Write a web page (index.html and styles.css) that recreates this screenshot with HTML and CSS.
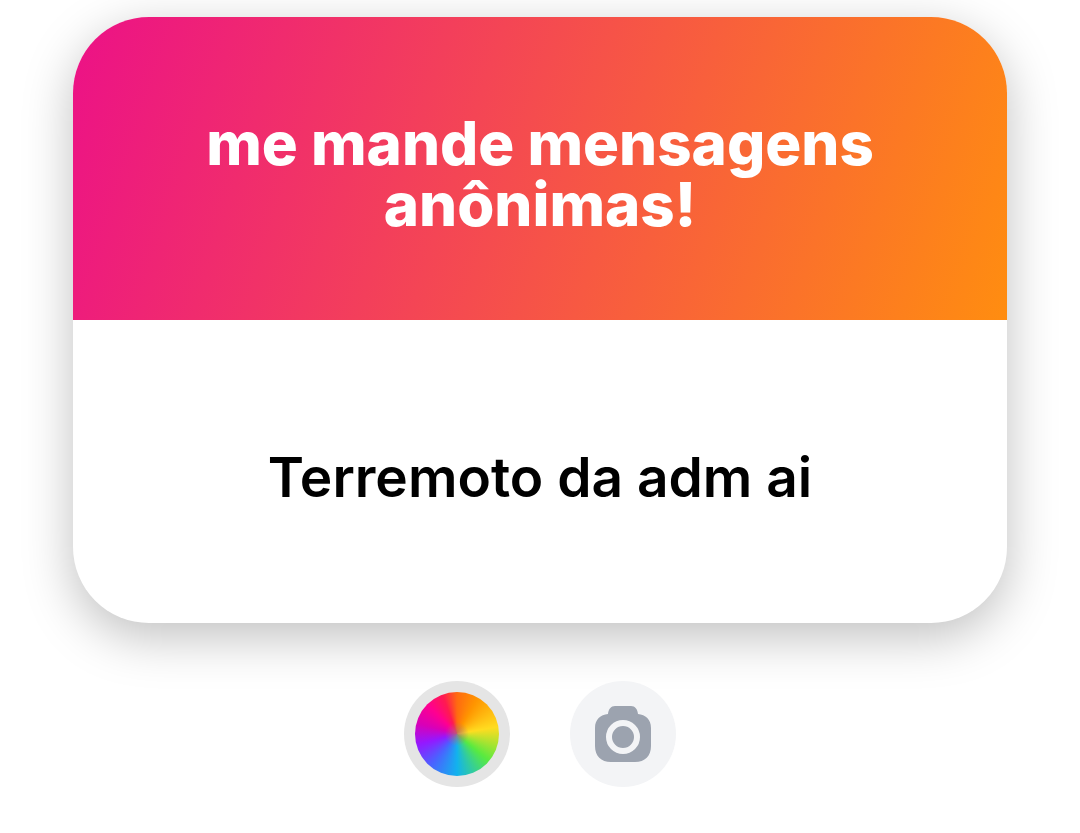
FILE: index.html
```html
<!DOCTYPE html>
<html lang="pt-BR">
<head>
<meta charset="utf-8">
<meta name="viewport" content="width=device-width, initial-scale=1">
<title>me mande mensagens anônimas!</title>
<link rel="stylesheet" href="styles.css">
</head>
<body>
<main class="page">
  <article class="card">
    <header class="card-header">
      <h1 class="card-title">me mande mensagens anônimas!</h1>
    </header>
    <div class="card-body">
      <p class="message">Terremoto da adm ai</p>
    </div>
  </article>
  <div class="tools">
    <button class="tool tool-color" type="button" aria-label="Cor"><span class="wheel"></span></button>
    <button class="tool tool-camera" type="button" aria-label="Câmera">
      <svg class="camera" viewBox="0 0 56 56" aria-hidden="true">
        <path fill="#9ca3af" d="M20 0H36C40 0 42.500 3 43 8C50.500 9 56 13 56 22V40C56 50 50 56 40 56H16C6 56 0 50 0 40V22C0 13 5.500 9 13 8C13.500 3 16 0 20 0Z"/>
        <circle cx="28" cy="31" r="14" fill="none" stroke="#f3f4f6" stroke-width="6"/>
      </svg>
    </button>
  </div>
</main>
</body>
</html>
```
FILE: styles.css
```css
* {
  box-sizing: border-box;
}

body {
  margin: 0;
  background: #fff;
  font-family: Inter, "Liberation Sans", sans-serif;
}

.page {
  display: flex;
  flex-direction: column;
  gap: 58px;
  padding: 17px 73px 46px;
}

.card {
  overflow: hidden;
  border-radius: 76px;
  background: #fff;
  box-shadow: 0 14px 50px rgba(0, 0, 0, 0.25);
}

.card-header {
  padding: 96px 120px 85px;
  background: linear-gradient(108deg, #ec1187, #ff8d10);
}

.card-title {
  margin: 0;
  color: #fff;
  font-size: 60px;
  font-weight: 800;
  line-height: 61px;
  text-align: center;
}

.card-body {
  padding: 121px 48px 110px;
}

.message {
  margin: 0;
  color: #000;
  font-size: 55px;
  font-weight: 600;
  line-height: 72px;
  text-align: center;
}

.tools {
  display: flex;
  justify-content: center;
  gap: 60px;
}

.tool {
  display: grid;
  place-items: center;
  width: 106px;
  height: 106px;
  padding: 0;
  border: 0;
  border-radius: 50%;
}

.tool-color {
  background: #e5e5e5;
}

.tool-camera {
  background: #f3f4f6;
}

.wheel {
  width: 84px;
  height: 84px;
  border-radius: 50%;
  background:
    radial-gradient(circle, rgba(176, 112, 112, 0.8), rgba(176, 112, 112, 0) 12px),
    conic-gradient(#ff6a10, #ff9500 30deg, #ffdc20 80deg, #58ea40 130deg, #12b2ee 180deg, #4a62ff 220deg, #9418ff 255deg, #d800b8 285deg, #ff0090 315deg, #ff1a50 340deg, #ff6a10);
}

.camera {
  width: 56px;
  height: 56px;
}
```
